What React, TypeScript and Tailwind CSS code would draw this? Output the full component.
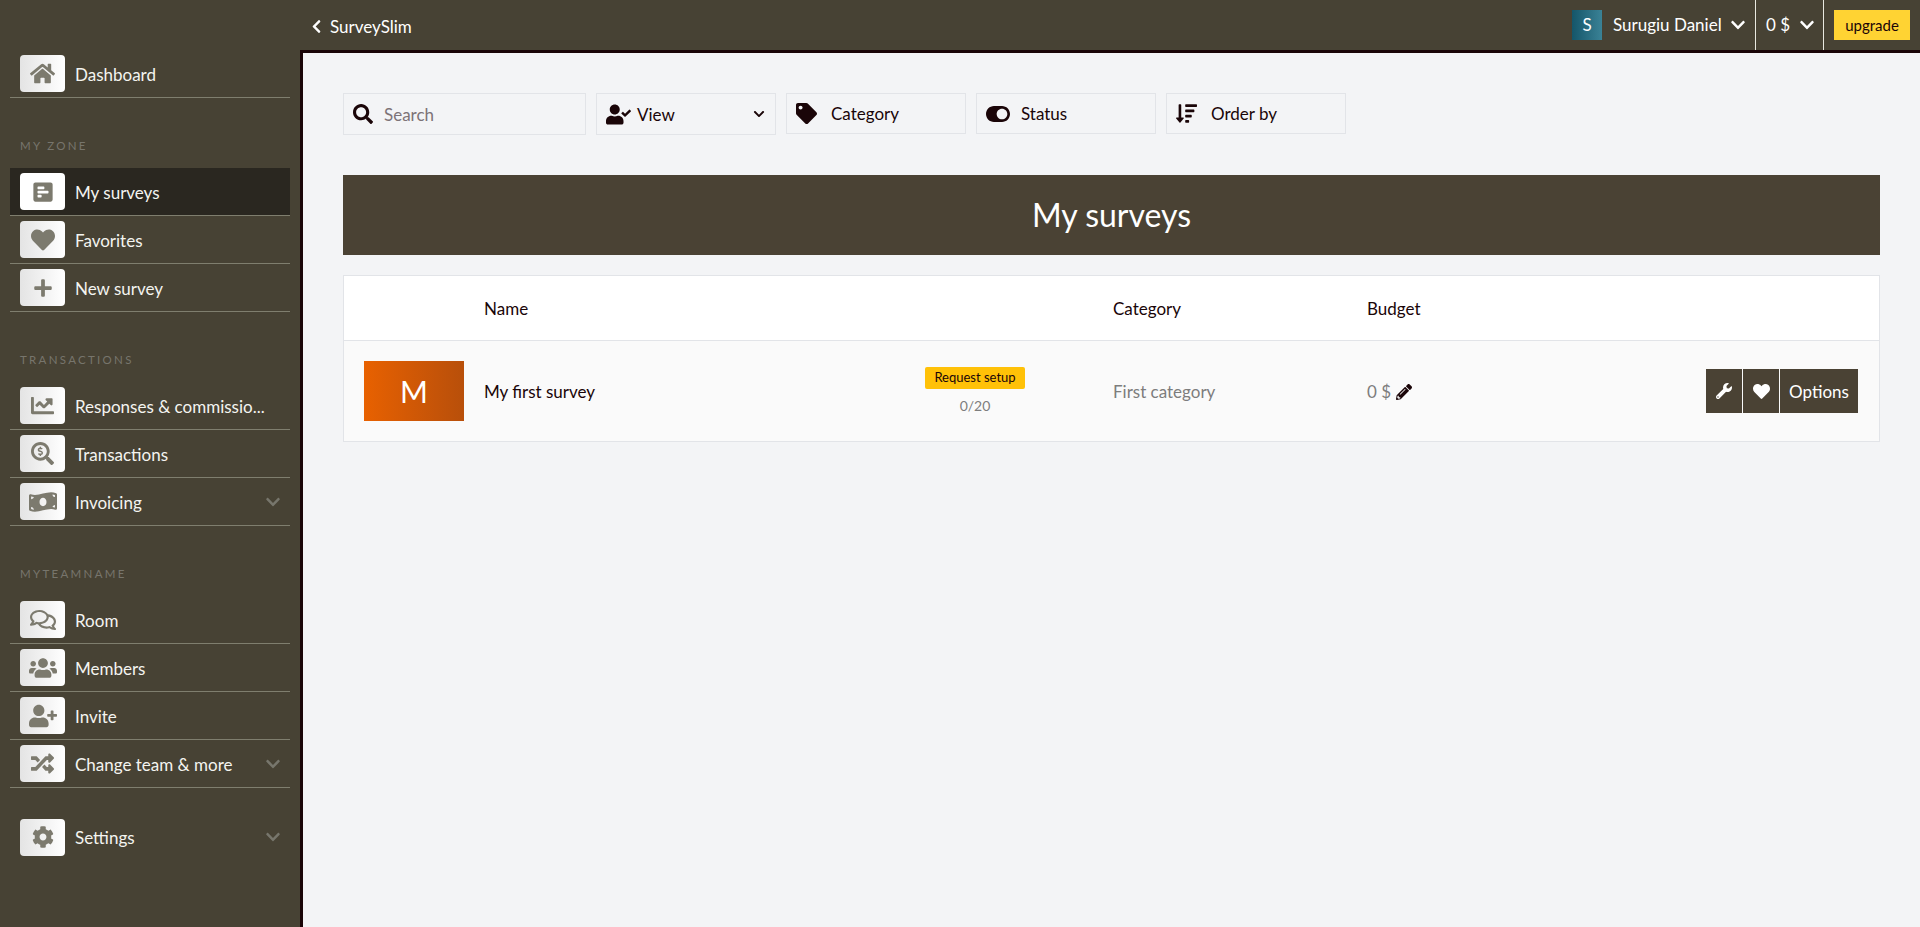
import React from "react";
import {
  FaHome, FaPollH, FaHeart, FaPlus, FaChartLine, FaSearchDollar, FaMoneyBillWave, FaRegComments,
  FaUsers, FaUserPlus, FaRandom, FaCog, FaSearch, FaUserCheck, FaTag, FaToggleOn, FaSortAmountDown,
  FaWrench, FaPencilAlt, FaChevronDown, FaChevronLeft,
} from "react-icons/fa";

type Item = { label: string; icon: React.ReactNode; active?: boolean; chevron?: boolean; last?: boolean };

function NavRow({ label, icon, active, chevron, last }: Item) {
  return (
    <div className={`flex h-[48px] items-center gap-[10px] pl-[10px] pr-[9px] ${last ? "" : "border-b border-[#7f7e6e]"} ${active ? "bg-[#2a2720]" : ""}`}>
      <div className={`flex h-[37px] w-[45px] shrink-0 items-center justify-center rounded-[4px] text-[#7c7a6e] ${active ? "bg-white" : "bg-gradient-to-r from-[#e4e4e4] to-white"}`}>
        {icon}
      </div>
      <span className="min-w-0 flex-1 whitespace-nowrap pt-[2px] text-[17px] text-[#f4f4f0]">{label}</span>
      {chevron && <FaChevronDown size={16} className="shrink-0 text-[#77766c]" />}
    </div>
  );
}

function SectionLabel({ children }: { children: React.ReactNode }) {
  return (
    <div className="h-[70px] pl-[10px] pt-[41px] text-[11.5px] leading-[14px] tracking-[0.2em] text-[#77756c]">
      {children}
    </div>
  );
}

function Filter({ icon, label, size = "w-[180px] h-[41px]", trailing, muted, gap = "w-[35px]" }: { icon: React.ReactNode; label: string; size?: string; trailing?: React.ReactNode; muted?: boolean; gap?: string }) {
  return (
    <div className={`flex items-center border border-[#e2e4e8] pl-[9px] pr-[10px] text-[17px] ${size} ${muted ? "text-[#7d7377]" : "text-[#1a0508]"}`}>
      <div className={`flex shrink-0 items-center text-[#1a0508] ${gap}`}>{icon}</div>
      <span className="pt-[1px]">{label}</span>
      {trailing && <div className="ml-auto text-[#1a0508]">{trailing}</div>}
    </div>
  );
}

export default function App() {
  return (
    <div className="flex h-screen overflow-hidden bg-[#474234] font-['Lato','Liberation_Sans',sans-serif]">
      <aside className="w-[300px] shrink-0 pl-[10px] pr-[10px] pt-[50px]">
        <NavRow label="Dashboard" icon={<FaHome size={25} />} />
        <SectionLabel>MY ZONE</SectionLabel>
        <NavRow label="My surveys" active icon={<FaPollH size={22} />} />
        <NavRow label="Favorites" icon={<FaHeart size={24} />} />
        <NavRow label="New survey" icon={<FaPlus size={20} />} />
        <SectionLabel>TRANSACTIONS</SectionLabel>
        <NavRow label="Responses & commissio..." icon={<FaChartLine size={23} />} />
        <NavRow label="Transactions" icon={<FaSearchDollar size={23} />} />
        <NavRow label="Invoicing" chevron icon={<FaMoneyBillWave size={28} />} />
        <SectionLabel>MYTEAMNAME</SectionLabel>
        <NavRow label="Room" icon={<FaRegComments size={26} />} />
        <NavRow label="Members" icon={<FaUsers size={28} />} />
        <NavRow label="Invite" icon={<FaUserPlus size={28} />} />
        <NavRow label="Change team & more" chevron icon={<FaRandom size={23} />} />
        <div className="h-[25px]" />
        <NavRow label="Settings" chevron last icon={<FaCog size={22} />} />
      </aside>

      <div className="flex min-w-0 flex-1 flex-col">
        <header className="flex h-[50px] shrink-0 items-center pl-[9px] text-white">
          <FaChevronLeft size={15} className="mt-[3px]" />
          <span className="ml-[6px] pt-[4px] text-[17px]">SurveySlim</span>
          <div className="ml-auto flex h-full items-center">
            <div className="flex h-[30px] w-[30px] items-center justify-center bg-gradient-to-r from-[#14566a] to-[#3a8296] text-[17px]">S</div>
            <span className="ml-[11px] w-[107px] whitespace-nowrap text-[17px]">Surugiu Daniel</span>
            <FaChevronDown size={16} className="ml-[10px]" />
            <div className="ml-[9px] flex h-full w-[69px] items-center border-x border-[#e8e8e0] pl-[10px] pr-[8px]">
              <span className="text-[17px]">0 $</span>
              <FaChevronDown size={16} className="ml-auto" />
            </div>
            <button className="ml-[10px] mr-[10px] h-[30px] w-[76px] bg-[#ffd333] text-[15px] text-[#1a0508]">upgrade</button>
          </div>
        </header>

        <main className="flex-1 border-l-[3px] border-t-[3px] border-[#1a0508] bg-[#f3f4f6] px-[40px] pt-[40px]">
          <div className="flex items-start gap-[10px]">
            <Filter icon={<FaSearch size={20} />} label="Search" muted gap="w-[31px]" size="w-[243px] h-[42px]" />
            <Filter icon={<FaUserCheck size={25} />} label="View" gap="w-[31px]" size="w-[180px] h-[42px]" trailing={<FaChevronDown size={12} />} />
            <Filter icon={<FaTag size={21} />} label="Category" />
            <Filter icon={<FaToggleOn size={24} />} label="Status" />
            <Filter icon={<FaSortAmountDown size={21} />} label="Order by" />
          </div>

          <div className="mt-[40px] flex h-[80px] items-center justify-center bg-[#4a4234] text-[32px] text-white">My surveys</div>

          <div className="mt-[20px] border border-[#e2e4e8]">
            <div className="grid h-[65px] grid-cols-[140px_441px_188px_254px_1fr] items-center border-b border-[#e2e4e8] bg-white pt-[2px] text-[17px] text-[#1a0508]">
              <div />
              <div>Name</div>
              <div />
              <div>Category</div>
              <div>Budget</div>
            </div>
            <div className="grid h-[100px] grid-cols-[140px_441px_188px_254px_1fr] items-center bg-[#fafafa] text-[17px]">
              <div className="pl-[20px]">
                <div className="flex h-[60px] w-[100px] items-center justify-center bg-gradient-to-r from-[#e86100] to-[#b84f0a] text-[30px] text-white">M</div>
              </div>
              <div className="pt-[2px] text-[#1a0508]">My first survey</div>
              <div className="w-[100px] text-center">
                <div className="flex h-[22px] items-center justify-center rounded-[2px] bg-[#ffc107] text-[13px] text-[#1a0508]">Request setup</div>
                <div className="mt-[6px] text-[14px] text-[#7d7d7d]">0/20</div>
              </div>
              <div className="pt-[2px] text-[#7d7d7d]">First category</div>
              <div className="flex items-center justify-between pr-[21px]">
                <div className="flex items-center gap-[5px] pt-[1px] text-[#7d7d7d]">
                  <span>0 $</span>
                  <FaPencilAlt size={16} className="text-[#1a0508]" />
                </div>
                <div className="flex h-[44px] text-white">
                  <div className="flex w-[37px] items-center justify-center border-r border-[#fafafa] bg-[#4a4234]"><FaWrench size={16} /></div>
                  <div className="flex w-[37px] items-center justify-center border-r border-[#fafafa] bg-[#4a4234]"><FaHeart size={17} /></div>
                  <div className="flex w-[78px] items-center justify-center bg-[#4a4234] pt-[2px] text-[17px]">Options</div>
                </div>
              </div>
            </div>
          </div>
        </main>
      </div>
    </div>
  );
}
